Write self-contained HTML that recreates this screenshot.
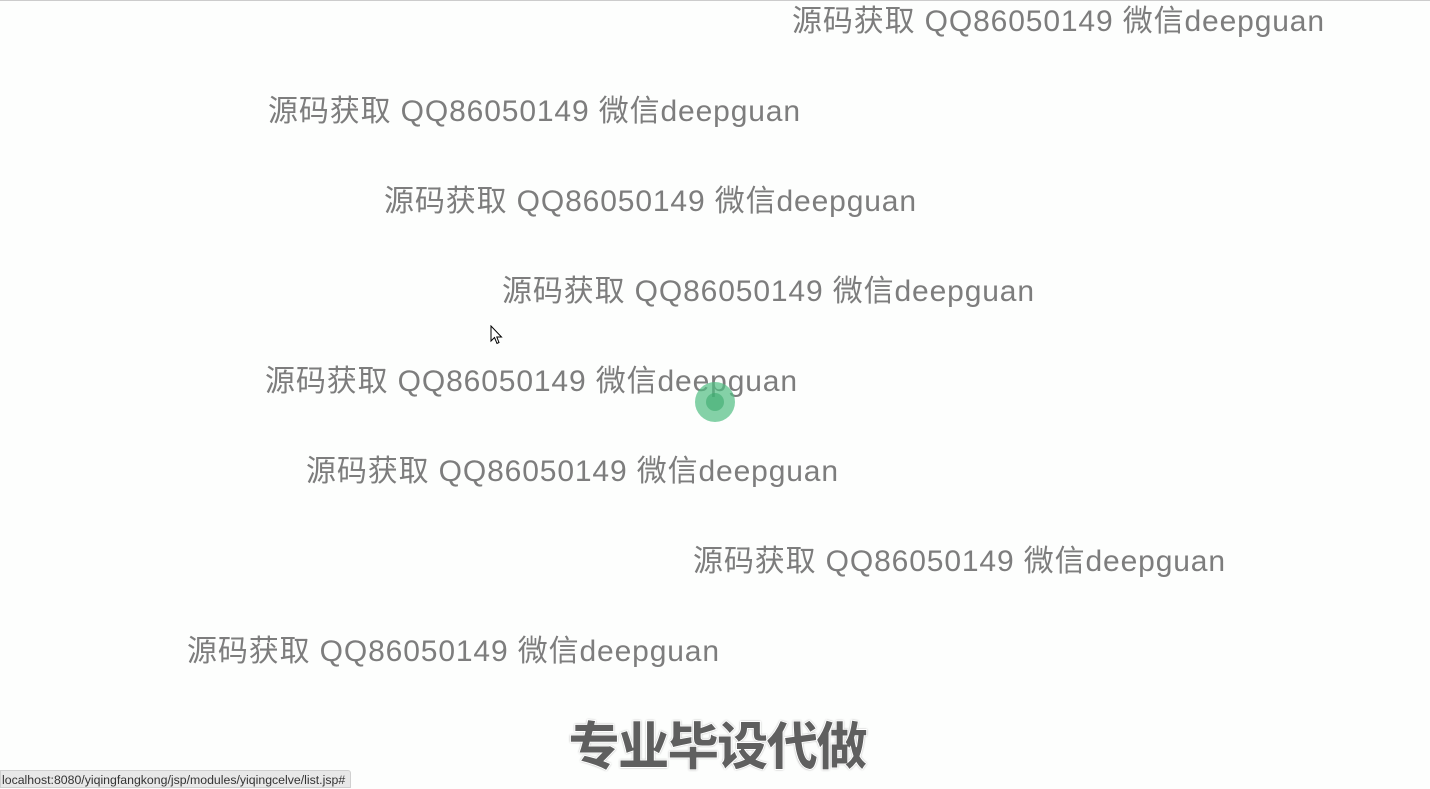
<!DOCTYPE html>
<html><head><meta charset="utf-8"><style>
html,body{margin:0;padding:0;width:1430px;height:786px;overflow:hidden;background:#fdfefd;}
.t{position:absolute;font-family:"Liberation Sans","Noto Sans CJK SC",sans-serif;font-size:30px;color:#7d7d7d;white-space:nowrap;line-height:40px;letter-spacing:0.87px;}
.big{position:absolute;left:568px;top:711px;font-family:"Noto Sans CJK SC",sans-serif;font-weight:900;font-size:52px;color:#5f5f5f;line-height:64px;letter-spacing:-2.4px;-webkit-text-stroke:1px #fff;text-shadow:0 0 2px #999,0 0 1px #888;}
.url{position:absolute;left:0;top:770px;height:16px;padding:0 5px 0 1px;background:#e8e8e8;border:1px solid #d0d0d0;border-radius:0 3px 0 0;font-family:"Liberation Sans",sans-serif;font-size:12.3px;line-height:18px;color:#333;}
</style></head><body>
<div style="position:absolute;left:0;top:0;width:1430px;height:1px;background:#ccc"></div>
<div class="t" style="left:792px;top:2px">源码获取 QQ86050149 微信deepguan</div>
<div class="t" style="left:268px;top:92px">源码获取 QQ86050149 微信deepguan</div>
<div class="t" style="left:384px;top:182px">源码获取 QQ86050149 微信deepguan</div>
<div class="t" style="left:502px;top:272px">源码获取 QQ86050149 微信deepguan</div>
<div class="t" style="left:265px;top:362px">源码获取 QQ86050149 微信deepguan</div>
<div class="t" style="left:306px;top:452px">源码获取 QQ86050149 微信deepguan</div>
<div class="t" style="left:693px;top:542px">源码获取 QQ86050149 微信deepguan</div>
<div class="t" style="left:187px;top:632px">源码获取 QQ86050149 微信deepguan</div>
<div style="position:absolute;left:695px;top:382px;width:40px;height:40px;border-radius:50%;background:rgba(80,190,130,0.7)"></div>
<div style="position:absolute;left:706px;top:393px;width:18px;height:18px;border-radius:50%;background:rgba(60,170,110,0.6)"></div>
<svg style="position:absolute;left:490px;top:325px" width="14" height="22" viewBox="0 0 14 22"><path d="M1 1 L1 16 L4.5 12.5 L7 18.5 L9 17.5 L6.8 12 L11.5 12 Z" fill="#fff" stroke="#000" stroke-width="1"/></svg>
<div class="big">专业毕设代做</div>
<div class="url">localhost:8080/yiqingfangkong/jsp/modules/yiqingcelve/list.jsp#</div>
</body></html>
